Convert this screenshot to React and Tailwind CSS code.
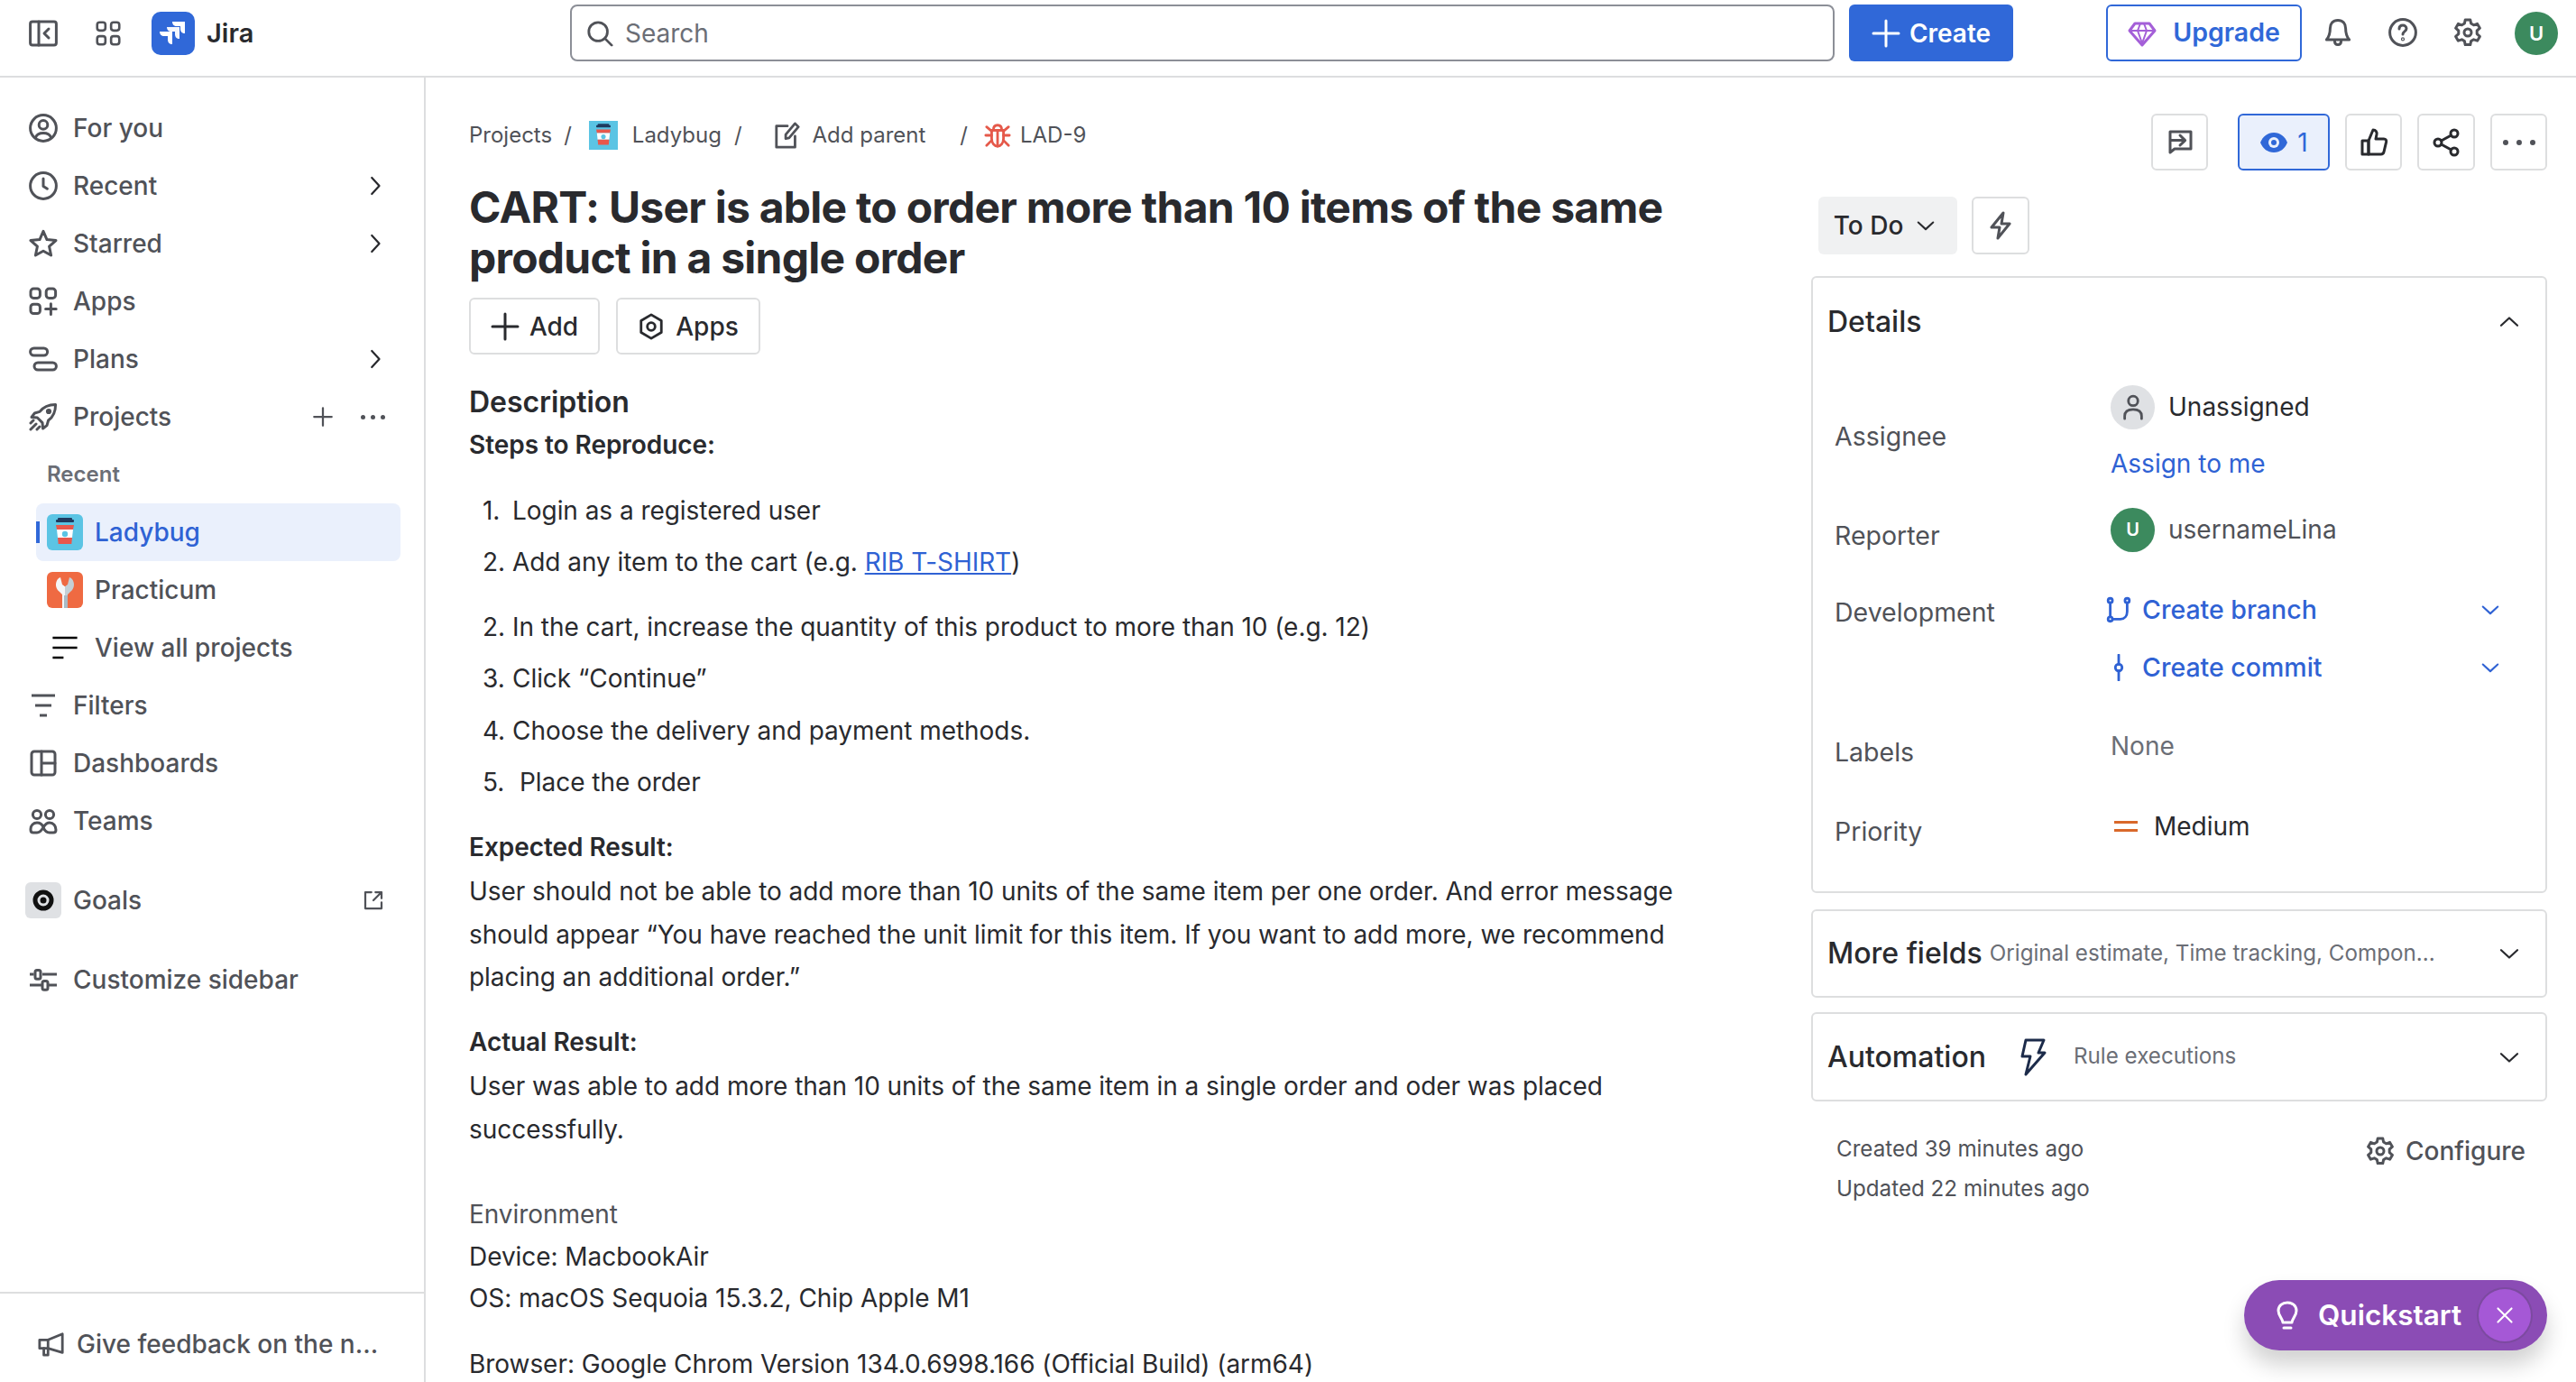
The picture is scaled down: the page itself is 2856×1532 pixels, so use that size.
import React from "react";

const FONT = { fontFamily: "Inter, 'Noto Sans', sans-serif" };

function Icon({ size = 32, className = "", children, sw = 1.5, vb = 16 }) {
  return (
    <svg
      width={size}
      height={size}
      viewBox={`0 0 ${vb} ${vb}`}
      fill="none"
      stroke="currentColor"
      strokeWidth={sw}
      strokeLinecap="round"
      strokeLinejoin="round"
      className={`shrink-0 ${className}`}
    >
      {children}
    </svg>
  );
}

const Chevron = ({ dir = "right", size = 24, className = "" }) => {
  const d = {
    right: "M5.5 2 L11 8 L5.5 14",
    down: "M2 5.5 L8 11 L14 5.5",
    up: "M2 10.5 L8 5 L14 10.5",
  }[dir];
  return (
    <Icon size={size} className={className}>
      <path d={d} />
    </Icon>
  );
};

const Gear = ({ size = 32, className = "" }) => (
  <Icon size={size} className={className}>
    <circle cx="8" cy="8" r="2" />
    <path d="M6.6 1 h2.8 l.4 2 1.5.9 2-.7 1.4 2.4-1.6 1.4 v1.8 l1.6 1.4-1.4 2.4-2-.7-1.5.9-.4 2 H6.6 l-.4-2-1.5-.9-2 .7-1.4-2.4 1.6-1.4 V7 L1.3 5.6 2.7 3.2 l2 .7 1.5-.9z" />
  </Icon>
);

const CupTile = ({ size = 40, square = false }) => (
  <svg width={size} height={size} viewBox="0 0 40 40" className={`shrink-0 ${square ? "" : "rounded-[6px]"}`}>
    <rect width="40" height="40" fill="#5bc4e4" />
    <rect x="10" y="6" width="20" height="3" rx="1" fill="#1f3a5f" />
    <rect x="12" y="4" width="16" height="4" rx="1" fill="#1f3a5f" />
    <path d="M10 12h20l-1 5H11z" fill="#e8574c" />
    <path d="M11 17h18l-1 9H12z" fill="#fff" />
    <path d="M12 26h16l-.7 7H12.7z" fill="#e8574c" />
    <circle cx="20" cy="22" r="3.2" fill="#5bc4e4" />
  </svg>
);

const WrenchTile = () => (
  <svg width="40" height="40" viewBox="0 0 40 40" className="shrink-0 rounded-[6px]">
    <rect width="40" height="40" fill="#ef6a42" />
    <path d="M15 6c-6 2-7 12-1 16l3 3v15h3V16l-3-2z" fill="#f4f6f7" />
    <path d="M25 6c6 2 7 12 1 16l-3 3v15h-3V16l3-2z" fill="#c4d0d6" />
    <path d="M15 5h3v9l2 2 2-2V5h3" fill="#ef6a42" />
    <rect x="19" y="26" width="4" height="14" fill="#a9bbc5" />
  </svg>
);

const JiraLogo = () => (
  <div className="w-12 h-12 rounded-[10px] bg-[#3068d8] flex items-center justify-center">
    <svg width="32" height="32" viewBox="0 0 32 32" fill="#fff">
      <path d="M15 3h14v13c-3 0-5-2-5-5V8h-4c-3 0-5-2-5-5z" />
      <path d="M9 9h14v13c-3 0-5-2-5-5v-3h-4c-3 0-5-2-5-5z" opacity="0.95" />
      <path d="M1 14h14v14c-3 0-5-2-5-5v-4H6c-3 0-5-2-5-5z" />
    </svg>
  </div>
);

function NavRow({ icon, label, right, tall }) {
  return (
    <div className={`flex items-center ${tall || "h-16"} pl-8 pr-[42px] text-[#505258] text-[28px] font-medium`}>
      <span className="w-8 h-8 flex items-center justify-center">{icon}</span>
      <span className="ml-[17px] flex-1">{label}</span>
      {right}
    </div>
  );
}

const RightChev = () => <Chevron className="text-[#292a2e]" size={24} />;

function Sidebar() {
  return (
    <aside className="w-[472px] shrink-0 border-r-2 border-[#dddedf] flex flex-col h-full">
      <div className="flex-1 pt-6">
        <NavRow
          label="For you"
          icon={
            <Icon>
              <circle cx="8" cy="8" r="7.2" />
              <circle cx="8" cy="6.2" r="2.4" />
              <path d="M3.8 13.2c.6-1.8 2-2.4 4.2-2.4s3.6.6 4.2 2.4" />
            </Icon>
          }
        />
        <NavRow
          label="Recent"
          right={<RightChev />}
          icon={
            <Icon>
              <circle cx="8" cy="8" r="7.2" />
              <path d="M8 4v4.2l2.2 1.4" />
            </Icon>
          }
        />
        <NavRow
          label="Starred"
          right={<RightChev />}
          icon={
            <Icon>
              <path d="M8 1.200l2 4.600 5 .5-3.700 3.300 1 4.900L8 12.100l-4.300 2.400 1-4.900L1 6.300l5-.5z" />
            </Icon>
          }
        />
        <NavRow
          label="Apps"
          icon={
            <Icon>
              <rect x="1" y="1" width="5.2" height="5.2" rx="1.6" />
              <rect x="9.6" y="1" width="5.2" height="5.2" rx="1.6" />
              <rect x="1" y="9.6" width="5.2" height="5.2" rx="1.6" />
              <path d="M12.2 9.4v5.8M9.3 12.3h5.8" />
            </Icon>
          }
        />
        <NavRow
          label="Plans"
          right={<RightChev />}
          icon={
            <Icon>
              <rect x="0.8" y="2" width="9.5" height="4" rx="2" />
              <rect x="3" y="10" width="12.2" height="4" rx="2" />
            </Icon>
          }
        />
        <NavRow
          label="Projects"
          right={
            <div className="flex items-center gap-[30px] mr-[1px] text-[#505258]">
              <Icon size={24}>
                <path d="M8 1.500v13M1.500 8h13" />
              </Icon>
              <span className="flex gap-[6px]">
                <i className="w-[5px] h-[5px] rounded-full bg-current" />
                <i className="w-[5px] h-[5px] rounded-full bg-current" />
                <i className="w-[5px] h-[5px] rounded-full bg-current" />
              </span>
            </div>
          }
          icon={
            <Icon>
              <path d="M6 5.200C8 2.500 10.800 1.200 14.800 1.200 14.800 5.200 13.500 8 10.800 10L10 12.800 7.800 14.500 7.500 11.300 4.700 8.500 1.500 8.200 3.200 6z" />
              <path d="M1 15l3-3M1 11.500l1.500-1.500M4.500 15L6 13.500" />
              <circle cx="11" cy="5" r="0.8" />
            </Icon>
          }
        />
        <div className="h-16 pl-[52px] pt-[17px] text-[24px] leading-[30px] font-semibold text-[#6b6e76]">Recent</div>
        <div className="ml-10 mr-[26px] h-16 rounded-[8px] bg-[#eaf0fc] flex items-center relative">
          <span className="absolute left-0 top-[20px] w-1 h-6 bg-[#3068d8]" />
          <span className="ml-3">
            <CupTile />
          </span>
          <span className="ml-[13px] text-[28px] font-medium text-[#2f62d4]">Ladybug</span>
        </div>
        <div className="ml-[52px] h-16 flex items-center">
          <WrenchTile />
          <span className="ml-[13px] text-[28px] font-medium text-[#505258]">Practicum</span>
        </div>
        <div className="ml-[52px] h-16 flex items-center">
          <span className="w-10 flex justify-center">
            <Icon size={32} sw={1.300}>
              <path d="M1.200 2.500h13.600M1.200 8h13.600M1.200 13.500h6" strokeLinecap="butt" />
            </Icon>
          </span>
          <span className="ml-[13px] text-[28px] font-medium text-[#505258]">View all projects</span>
        </div>
        <NavRow
          label="Filters"
          icon={
            <Icon>
              <path d="M1.500 2.500h13M3.500 8h9M6 13.500h4" strokeLinecap="butt" />
            </Icon>
          }
        />
        <NavRow
          label="Dashboards"
          icon={
            <Icon>
              <rect x="1.500" y="1.500" width="13" height="13" rx="1.500" />
              <path d="M7 1.500v13M7 8h7.500" />
            </Icon>
          }
        />
        <NavRow
          label="Teams"
          icon={
            <Icon>
              <circle cx="4.500" cy="4.500" r="2.300" />
              <circle cx="11.500" cy="4.500" r="2.300" />
              <path d="M1 12.500c0-2 1.500-3.500 3.500-3.500 2 0 3 1.200 3.500 2.500.5 1.300 1.500 3 3.500 3h2c1 0 1.500-.7 1.500-1.500 0-2.300-1.500-4-3.500-4-1.500 0-2.500 1-3.300 2.300-.8 1.200-1.700 3.200-3.700 3.200h-2c-.9 0-1.500-.6-1.500-1.500z" />
            </Icon>
          }
        />
        <div className="mt-6">
          <NavRow
            label="Goals"
            right={
              <Icon size={24} className="mr-[2px]">
                <path d="M6.500 2H2v12h12V9.500" />
                <path d="M8 8l6-6M9.500 2H14v4.500" />
              </Icon>
            }
            icon={
              <span className="w-10 h-10 rounded-[6px] bg-[#dfe1e4] flex items-center justify-center shrink-0">
                <svg width="24" height="24" viewBox="0 0 24 24">
                  <circle cx="12" cy="12" r="9" fill="none" stroke="#111" strokeWidth="5" />
                  <circle cx="12" cy="12" r="3.500" fill="#111" />
                </svg>
              </span>
            }
          />
        </div>
        <div className="mt-6">
          <NavRow
            label="Customize sidebar"
            icon={
              <Icon>
                <path d="M.5 5h2.300M7.500 5h8M.5 11h6.500M11 11h4.500" strokeLinecap="butt" />
                <rect x="3.500" y="2.800" width="3" height="4.800" rx="1" />
                <rect x="7.500" y="8.800" width="3" height="4.800" rx="1" />
              </Icon>
            }
          />
        </div>
      </div>
      <div className="h-[100px] border-t-2 border-[#dddedf] flex items-center pl-[42px] pt-[14px] text-[28px] font-medium text-[#505258]">
        <Icon size={30}>
          <path d="M1 5.500h5l8.500-3.500v11L6 10.500H1z" />
          <path d="M3.500 10.500v4h2.500v-3.500" />
          <path d="M6 5.500v5" />
        </Icon>
        <span className="ml-[13px]">Give feedback on the n...</span>
      </div>
    </aside>
  );
}

function TopBar() {
  return (
    <header className="h-[86px] shrink-0 border-b-2 border-[#dddedf] flex items-start relative">
      <div className="flex items-center h-[74px] pl-8 text-[#505258]">
        <Icon>
          <rect x="0.800" y="1.500" width="14.400" height="13" rx="1.200" />
          <path d="M5.500 1.500v13M11 5.500L8.500 8l2.500 2.500" />
        </Icon>
        <span className="ml-[42px]">
          <Icon size={28}>
            <rect x="1" y="1" width="5.200" height="5.200" rx="1.600" />
            <rect x="9.800" y="1" width="5.200" height="5.200" rx="1.600" />
            <rect x="1" y="9.800" width="5.200" height="5.200" rx="1.600" />
            <rect x="9.800" y="9.800" width="5.200" height="5.200" rx="1.600" />
          </Icon>
        </span>
        <span className="ml-[34px]">
          <JiraLogo />
        </span>
        <span className="ml-[13px] text-[29px] font-semibold text-[#292a2e]">Jira</span>
      </div>
      <div className="absolute left-[632px] top-[5px] w-[1402px] h-[63px] rounded-[8px] border-2 border-[#8c8f97] flex items-center pl-4 text-[#505258]">
        <Icon size={30}>
          <circle cx="7" cy="7" r="5.500" />
          <path d="M11 11l4 4" />
        </Icon>
        <span className="ml-[13px] text-[28px] text-[#6b6e76]">Search</span>
      </div>
      <div className="absolute left-[2050px] top-[5px] w-[182px] h-[63px] rounded-[6px] bg-[#3068d8] flex items-center justify-center text-white text-[28px] font-semibold">
        <Icon size={32}>
          <path d="M8 1v14M1 8h14" />
        </Icon>
        <span className="ml-[10px]">Create</span>
      </div>
      <div className="absolute left-[2335px] top-[5px] w-[217px] h-[63px] rounded-[6px] border-2 border-[#3068d8] flex items-center justify-center text-[#3068d8] text-[28.5px] font-semibold">
        <svg width="32" height="32" viewBox="0 0 32 32" fill="none" stroke="#a45fd8" strokeWidth="3" strokeLinejoin="round" className="shrink-0">
          <path d="M8 5h16l6 8-14 16L2 13z" />
          <path d="M2 13h28M11 13l5 14 5-14M11 13l3-8M21 13l-3-8" strokeWidth="2" />
        </svg>
        <span className="ml-[18px]">Upgrade</span>
      </div>
      <div className="absolute left-[2576px] top-[20px] text-[#505258]">
        <Icon>
          <path d="M8 1.200c-2.800 0-4.300 2-4.300 4.500 0 3-.5 4.500-2 6.300h12.600c-1.500-1.800-2-3.300-2-6.300 0-2.500-1.500-4.500-4.300-4.500z" />
          <path d="M6.200 12.500c0 1.500.8 2.300 1.800 2.300s1.800-.8 1.800-2.300" />
        </Icon>
      </div>
      <div className="absolute left-[2648px] top-[20px] text-[#505258]">
        <Icon>
          <circle cx="8" cy="8" r="7.200" />
          <path d="M6 6c0-1.300.9-2 2-2s2 .7 2 1.900c0 1.500-2 1.600-2 3.100" />
          <circle cx="8" cy="11.700" r="0.300" />
        </Icon>
      </div>
      <div className="absolute left-[2720px] top-[20px] text-[#505258]">
        <Gear />
      </div>
      <div className="absolute left-[2788px] top-[13px] w-12 h-12 rounded-full bg-[#3c8a5e] flex items-center justify-center text-white text-[22px] font-semibold">
        U
      </div>
    </header>
  );
}

const Outline = ({ className = "", children }) => (
  <div className={`border-2 border-[#dddedf] rounded-[6px] flex items-center justify-center shrink-0 ${className}`}>{children}</div>
);

const Slash = ({ className = "" }) => <span className={`text-[#505258] ${className}`}>/</span>;

function Breadcrumb() {
  return (
    <div className="flex items-center h-8 text-[24px] text-[#505258]">
      <span>Projects</span>
      <Slash className="ml-[13px]" />
      <span className="ml-[19px]">
        <CupTile size={32} square />
      </span>
      <span className="ml-4">Ladybug</span>
      <Slash className="ml-[14px]" />
      <span className="ml-[35px]">
        <Icon size={30}>
          <path d="M8 2.500H1.500V15h11V8.500" />
          <path d="M7 10V7.500L12.500 1l2 2L9 9.500z" />
        </Icon>
      </span>
      <span className="ml-[13px]">Add parent</span>
      <Slash className="ml-[38px]" />
      <span className="ml-[18px] text-[#e5594a]">
        <Icon size={30}>
          <path d="M5.500 5c0-2 1-3 2.500-3s2.500 1 2.500 3z" />
          <path d="M4.500 5h7v5c0 2.500-1.500 4.500-3.500 4.500S4.500 12.500 4.500 10z" />
          <path d="M8 5v9.500M1 8h3.500M11.500 8H15M1.500 3l3 2.500M14.500 3l-3 2.500M1.500 14l3-3M14.500 14l-3-3" />
        </Icon>
      </span>
      <span className="ml-[10px]">LAD-9</span>
    </div>
  );
}

const Line = ({ className = "", bold, children }) => (
  <div className={`h-12 leading-[48px] whitespace-nowrap ${bold ? "font-semibold" : ""} ${className}`}>{children}</div>
);

const Li = ({ n, className = "", children }) => (
  <div className={`flex h-12 leading-[48px] pl-[15px] ${className}`}>
    <span className="w-[33px]">{n}.</span>
    {children}
  </div>
);

function Body() {
  return (
    <div className="text-[28px] text-[#292a2e] tracking-[-0.05px]">
      <div className="h-[47px] leading-[48px] mt-[29px] text-[32px] font-semibold">Description</div>
      <Line bold>Steps to Reproduce:</Line>
      <Li n="1" className="mt-[25px]">Login as a registered user</Li>
      <Li n="2" className="mt-[9px]">
        <span>
          Add any item to the cart (e.g. <span className="underline text-[#2f62d4]">RIB T-SHIRT</span>)
        </span>
      </Li>
      <Li n="2" className="mt-[24px]">In the cart, increase the quantity of this product to more than 10 (e.g. 12)</Li>
      <Li n="3" className="mt-[9px]">Click “Continue”</Li>
      <Li n="4" className="mt-[10px]">Choose the delivery and payment methods.</Li>
      <Li n="5" className="mt-[9px]"><span className="ml-2">Place the order</span></Li>
      <Line bold className="mt-[24px]">Expected Result:</Line>
      <p className="mt-[2px] leading-[47.500px]">
        User should not be able to add more than 10 units of the same item per one order. And error message should appear “You have reached the unit limit for this item. If you want to add more, we recommend placing an additional order.”
      </p>
      <Line bold className="mt-[23px]">Actual Result:</Line>
      <p className="mt-[1px] leading-[48px]">
        User was able to add more than 10 units of the same item in a single order and oder was placed successfully.
      </p>
      <div className="h-[47px] leading-[48px] mt-[46px] text-[#505258]">Environment</div>
      <div className="h-[46px] leading-[48px]">Device: MacbookAir</div>
      <Line>OS: macOS Sequoia 15.3.2, Chip Apple M1</Line>
      <Line className="mt-[25px]">Browser: Google Chrom Version 134.0.6998.166 (Official Build) (arm64)</Line>
    </div>
  );
}

function Issue() {
  return (
    <div className="w-[1536px] shrink-0 pl-12 pr-[108px] pt-12">
      <Breadcrumb />
      <h1 className="mt-9 text-[48px] leading-[56px] font-bold text-[#292a2e] tracking-[-0.75px]">
        CART: User is able to order more than 10 items of the same product in a single order
      </h1>
      <div className="flex gap-[18px] mt-4 text-[#292a2e] text-[28px] font-medium">
        <Outline className="w-[145px] h-[63px]">
          <Icon size={32}>
            <path d="M8 1v14M1 8h14" />
          </Icon>
          <span className="ml-[11px]">Add</span>
        </Outline>
        <Outline className="w-[160px] h-[63px]">
          <Icon size={30}>
            <path d="M8 1l6 3.500v7L8 15l-6-3.500v-7z" />
            <circle cx="8" cy="8" r="2.300" />
          </Icon>
          <span className="ml-[12px]">Apps</span>
        </Outline>
      </div>
      <Body />
    </div>
  );
}

function DetailRow({ label, className = "", labelClass = "", children, valueClass = "" }) {
  return (
    <div className={`flex items-center pl-6 ${className}`}>
      <div className={`w-[306px] shrink-0 text-[28.5px] text-[#505258] ${labelClass}`}>{label}</div>
      <div className={`flex-1 ${valueClass}`}>{children}</div>
    </div>
  );
}

function Collapsed({ title, sub, icon, className = "h-[98px]" }) {
  return (
    <div className={`border-2 border-[#dddedf] rounded-[6px] flex items-center pl-4 pr-7 ${className}`}>
      <span className="text-[32px] font-medium text-[#292a2e] whitespace-nowrap">{title}</span>
      {icon}
      <span className="flex-1 text-[24.2px] text-[#6b6e76] ml-2 whitespace-nowrap">{sub}</span>
      <Chevron dir="down" size={24} className="text-[#292a2e]" />
    </div>
  );
}

function Panel() {
  return (
    <div className="w-[816px] shrink-0 pt-10">
      <div className="flex justify-end items-start h-[63px]">
        <Outline className="w-[63px] h-[63px] text-[#505258]">
          <Icon>
            <path d="M2.500 13.500V2h11.500v9.500H5z" />
            <path d="M3 6.800h7.500M8 4l2.800 2.800L8 9.500" />
          </Icon>
        </Outline>
        <div className="ml-[33px] w-[102px] h-[63px] rounded-[6px] border-2 border-[#3068d8] bg-[#eaf0fc] flex items-center justify-center text-[#3068d8] text-[28px] shrink-0">
          <svg width="32" height="32" viewBox="0 0 32 32" className="shrink-0">
            <path d="M1 16C4 9 9 5 16 5s12 4 15 11c-3 7-8 11-15 11S4 23 1 16z" fill="#3068d8" />
            <circle cx="16" cy="16" r="6" fill="#eaf0fc" />
            <circle cx="16" cy="16" r="3" fill="#3068d8" />
          </svg>
          <span className="ml-[10px]">1</span>
        </div>
        <Outline className="ml-[17px] w-[63px] h-[63px] text-[#292a2e]">
          <Icon>
            <path d="M5 7l2.500-6c1.500 0 2.200 1 2 2.500L9 6h4.500c1 0 1.500.7 1.300 1.700l-1.300 5.500c-.2.800-.8 1.300-1.600 1.300H5z" />
            <path d="M1.500 7H5v7.500H1.500z" />
          </Icon>
        </Outline>
        <Outline className="ml-[17px] w-[64px] h-[63px] text-[#292a2e]">
          <Icon>
            <circle cx="12.500" cy="3" r="2" />
            <circle cx="3.500" cy="8" r="2" />
            <circle cx="12.500" cy="13" r="2" />
            <path d="M5.300 7l5.500-3M5.300 9l5.500 3" />
          </Icon>
        </Outline>
        <Outline className="ml-[17px] w-[63px] h-[63px] gap-[9px] text-[#505258]">
          <i className="w-[6px] h-[6px] rounded-full bg-current" />
          <i className="w-[6px] h-[6px] rounded-full bg-current" />
          <i className="w-[6px] h-[6px] rounded-full bg-current" />
        </Outline>
      </div>

      <div className="flex mt-[29px] ml-2">
        <div className="w-[154px] h-[64px] rounded-[6px] bg-[#f0f1f2] flex items-center justify-center pr-[7px] text-[28px] font-medium text-[#292a2e]">
          To Do
          <Chevron dir="down" size={22} className="ml-[14px]" />
        </div>
        <Outline className="ml-[16px] w-[64px] h-[64px] text-[#505258]">
          <Icon>
            <path d="M9.500 1L3 9h4.500l-1 6L13 7H8.500z" />
          </Icon>
        </Outline>
      </div>

      <div className="mt-6 border-2 border-[#dddedf] rounded-[6px] h-[684px]">
        <div className="h-[115px] flex items-center pl-4 pr-7 pb-[17px]">
          <span className="flex-1 text-[32px] font-medium text-[#292a2e]">Details</span>
          <Chevron dir="up" size={24} className="text-[#292a2e]" />
        </div>
        <DetailRow label="Assignee" className="h-[123px]">
          <div className="flex items-center h-[50px] -mt-[8px]">
            <span className="w-[49px] h-[49px] rounded-full bg-[#dfe1e4] flex items-center justify-center text-[#505258]">
              <Icon size={30}>
                <circle cx="8" cy="4.500" r="2.800" />
                <path d="M3 15v-1.500C3 11 4.500 9.500 8 9.500s5 1.500 5 4V15" />
              </Icon>
            </span>
            <span className="ml-[15px] text-[28px] text-[#292a2e]">Unassigned</span>
          </div>
          <div className="mt-[17px] text-[28px] text-[#2f62d4]">Assign to me</div>
        </DetailRow>
        <DetailRow label="Reporter" className="h-[96px]" valueClass="mb-[14px]">
          <div className="flex items-center">
            <span className="w-[49px] h-[49px] rounded-full bg-[#3c8a5e] flex items-center justify-center text-white text-[20px] font-semibold">U</span>
            <span className="ml-[15px] text-[28px] text-[#505258]">usernameLina</span>
          </div>
        </DetailRow>
        <DetailRow label="Development" className="h-[136px] !items-start" labelClass="mt-[16px]">
          <div className="flex items-center h-16 mt-[2px] text-[28.5px] font-medium text-[#2f62d4]">
            <Icon size={30} className="-ml-[6px]">
              <circle cx="3" cy="2.500" r="1.300" />
              <circle cx="13" cy="2.500" r="1.300" />
              <circle cx="3" cy="13.500" r="1.300" />
              <path d="M3 4v8M13 4v5c0 2.500-1.500 4.500-4 4.500H4.500" />
            </Icon>
            <span className="ml-[11px] flex-1">Create branch</span>
            <Chevron dir="down" size={22} className="mr-[50px]" />
          </div>
          <div className="flex items-center h-16 text-[28.5px] font-medium text-[#2f62d4]">
            <Icon size={30} className="-ml-[6px]">
              <circle cx="8" cy="8" r="2" />
              <path d="M8 0.500V6M8 10v5.500" />
            </Icon>
            <span className="ml-[11px] flex-1">Create commit</span>
            <Chevron dir="down" size={22} className="mr-[50px]" />
          </div>
        </DetailRow>
        <DetailRow label="Labels" className="h-[112px]" valueClass="mb-[14px] text-[28px] text-[#6b6e76]">
          None
        </DetailRow>
        <DetailRow label="Priority" className="h-[64px]" valueClass="mb-[12px] flex items-center text-[28px] text-[#292a2e]">
          <span className="ml-[4px] flex flex-col gap-[6px] w-[26px]">
            <i className="h-[3px] bg-[#d9682a]" />
            <i className="h-[3px] bg-[#d9682a]" />
          </span>
          <span className="ml-[18px]">Medium</span>
        </DetailRow>
      </div>

      <div className="mt-[18px]">
        <Collapsed title="More fields" sub="Original estimate, Time tracking, Compon..." />
        <Collapsed
          className="mt-4 h-[99px]"
          title="Automation"
          sub="Rule executions"
          icon={
            <svg width="32" height="44" viewBox="0 0 32 44" fill="none" stroke="#1c2b4a" strokeWidth="3" strokeLinejoin="round" className="ml-[36px] mr-[21px] shrink-0">
              <path d="M8 3h20l-6 14h7L8 41l5-20H4z" />
            </svg>
          }
        />
      </div>

      <div className="flex justify-between mt-[31px] pl-7 pr-6">
        <div className="text-[24.2px] leading-[44px] text-[#505258]">
          <div>Created 39 minutes ago</div>
          <div>Updated 22 minutes ago</div>
        </div>
        <div className="flex items-center h-12 text-[28px] font-medium text-[#505258]">
          <Gear size={32} />
          <span className="ml-[12px]">Configure</span>
        </div>
      </div>
    </div>
  );
}

export default function App() {
  return (
    <div className="w-[2856px] h-[1532px] overflow-hidden bg-white flex flex-col relative" style={FONT}>
      <TopBar />
      <div className="flex flex-1 min-h-0">
        <Sidebar />
        <Issue />
        <Panel />
      </div>
      <div className="absolute left-[2488px] top-[1419px] w-[336px] h-[78px] rounded-full bg-[#8b4cb5] shadow-[0_16px_24px_rgba(0,0,0,0.18)] flex items-center pl-[32px] text-white text-[31.5px] font-semibold">
        <Icon size={32}>
          <path d="M5.500 12c0-2-2.500-3.500-2.500-6.500C3 2.800 5.200 1 8 1s5 1.800 5 4.500c0 3-2.500 4.500-2.500 6.500z" />
          <path d="M6 15h4" />
        </Icon>
        <span className="ml-[18px]">Quickstart</span>
        <span className="absolute right-[18px] top-[10px] w-[58px] h-[58px] rounded-full bg-[#a558d6] ring-2 ring-[#7c4aa0] flex items-center justify-center">
          <Icon size={22}>
            <path d="M2.500 2.500l11 11M13.500 2.500l-11 11" />
          </Icon>
        </span>
      </div>
    </div>
  );
}
